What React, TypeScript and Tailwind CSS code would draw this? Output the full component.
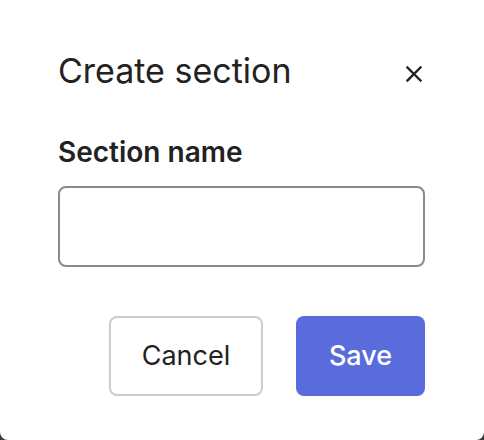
import React from 'react'

export default function App() {
  return (
    <div className="w-[484px] h-[440px] bg-[#3a3a3a] font-['Inter',sans-serif] text-[#222222]">
      <div className="h-full bg-white rounded-b-[8px] pl-[58px] pr-[59px] pt-[54px] flex flex-col">
        <div className="flex items-center justify-between h-[34px]">
          <h2 className="text-[34px] leading-[34px] font-normal">Create section</h2>
          <button className="w-[16px] h-[16px] flex items-center justify-center mr-[3px] mt-[5px]" aria-label="Close">
            <svg width="16" height="16" viewBox="0 0 16 16" fill="none">
              <path d="M1.5 1.5L14.5 14.5M14.5 1.5L1.5 14.5" stroke="#222222" strokeWidth="2.4" strokeLinecap="square" />
            </svg>
          </button>
        </div>
        <label className="mt-[50px] text-[28px] leading-[28px] font-semibold">Section name</label>
        <input
          type="text"
          className="mt-[20px] h-[81px] w-full rounded-[8px] border-2 border-[#8a8a8a] bg-white px-4 outline-none"
        />
        <div className="mt-[49px] flex justify-end gap-[33px]">
          <button className="w-[154px] h-[80px] rounded-[8px] border-2 border-[#cccccc] bg-white text-[27px] text-[#222222]">
            Cancel
          </button>
          <button className="w-[129px] h-[80px] rounded-[8px] bg-[#5a6bdc] text-[27px] font-medium text-white">
            Save
          </button>
        </div>
      </div>
    </div>
  )
}
